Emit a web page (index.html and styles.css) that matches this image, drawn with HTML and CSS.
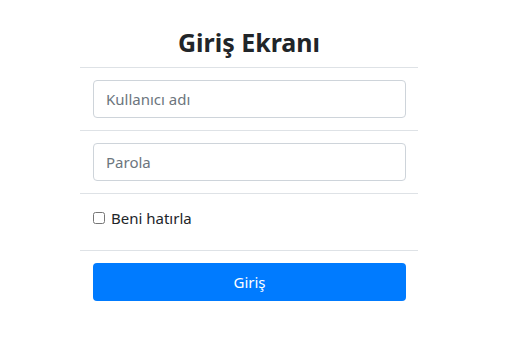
FILE: index.html
```html
<!DOCTYPE html>
<html lang="tr">
<head>
  <meta charset="UTF-8">
  <meta name="viewport" content="width=device-width, initial-scale=1.0">
  <title>Giriş Ekranı</title>
  <link rel="stylesheet" href="styles.css">
</head>
<body>
  <div class="login-container">
    <h3 class="login-title">Giriş Ekranı</h3>
    <table class="login-table">
      <tr>
        <td><input type="text" class="form-input" placeholder="Kullanıcı adı"></td>
      </tr>
      <tr>
        <td><input type="password" class="form-input" placeholder="Parola"></td>
      </tr>
      <tr>
        <td>
          <label class="remember">
            <input type="checkbox" class="remember-box">
            <span>Beni hatırla</span>
          </label>
        </td>
      </tr>
      <tr>
        <td><button class="login-button">Giriş</button></td>
      </tr>
    </table>
  </div>
</body>
</html>
```

FILE: styles.css
```css
body {
  font-family: "Noto Sans", "Open Sans", sans-serif;
  font-size: 16px;
  color: #212529;
  background-color: #fff;
  margin: 0;
  padding: 0;
}
.login-container {
  width: 338px;
  margin: 0 0 0 80px;
  padding-top: 25px;
}
.login-title {
  font-size: 25px;
  font-weight: 700;
  line-height: 34px;
  margin: 0 0 8px;
  text-align: center;
  color: #212529;
}
.login-table {
  width: 100%;
  border-collapse: collapse;
}
.login-table td {
  padding: 12px 12px 12px 13px;
  border-top: 1px solid #dee2e6;
}
.form-input {
  display: block;
  box-sizing: border-box;
  width: 100%;
  height: 38px;
  padding: 6px 12px;
  font-family: inherit;
  font-size: 15px;
  color: #495057;
  border: 1px solid #ced4da;
  border-radius: 4px;
  outline: none;
}
.form-input::placeholder {
  color: #6c757d;
}
.remember {
  display: flex;
  align-items: center;
  height: 24px;
  margin-bottom: 8px;
  font-size: 15px;
}
.remember-box {
  width: 12px;
  height: 12px;
  margin: 0 6px 0 0;
}
.login-button {
  display: block;
  width: 100%;
  height: 38px;
  font-family: inherit;
  font-size: 15px;
  color: #fff;
  background-color: #007bff;
  border: none;
  border-radius: 4px;
}
```
